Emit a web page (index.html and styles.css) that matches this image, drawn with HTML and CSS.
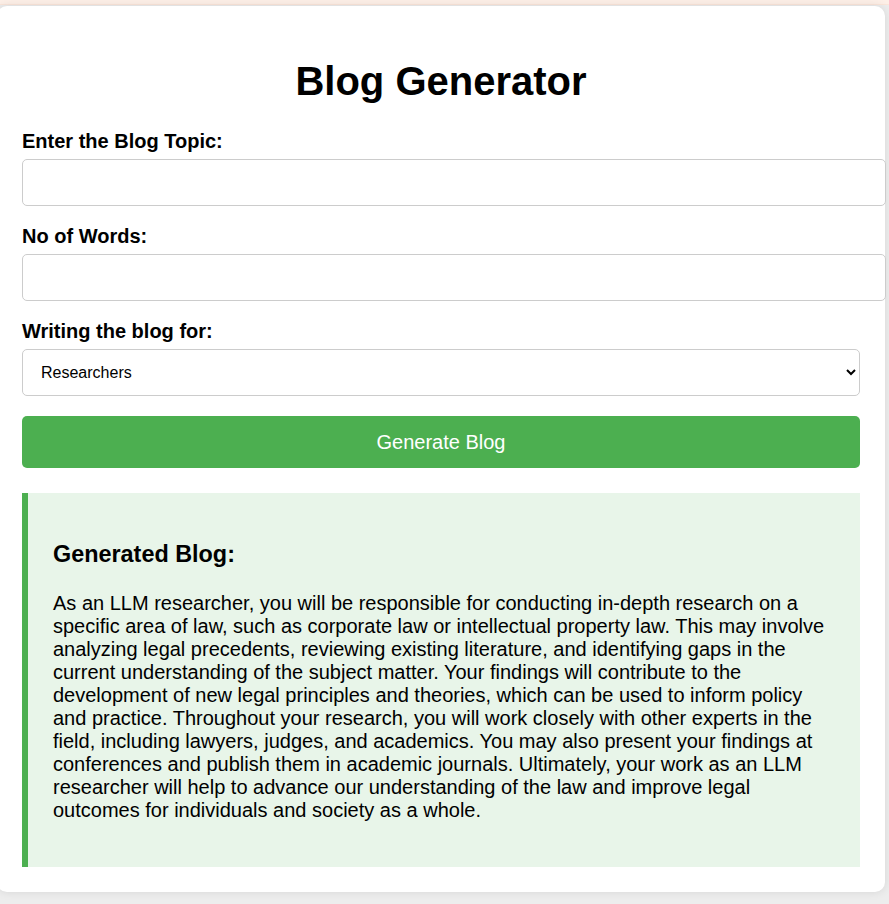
FILE: index.html
```html
<!DOCTYPE html>
<html lang="en">
<head>
<meta charset="utf-8">
<title>Blog Generator</title>
<link rel="stylesheet" href="styles.css">
</head>
<body>
<div class="topbar"></div>
<div class="card">
  <h1 class="title">Blog Generator</h1>
  <label class="field-label" for="topic">Enter the Blog Topic:</label>
  <input class="field-input" id="topic" type="text">
  <label class="field-label" for="words">No of Words:</label>
  <input class="field-input" id="words" type="text">
  <label class="field-label" for="audience">Writing the blog for:</label>
  <select class="field-select" id="audience">
    <option>Researchers</option>
    <option>Data Scientist</option>
    <option>Common People</option>
  </select>
  <button class="generate-btn" type="button">Generate Blog</button>
  <div class="output">
    <h3 class="output-title">Generated Blog:</h3>
    <p class="output-text">As an LLM researcher, you will be responsible for conducting in-depth research on a specific area of law, such as corporate law or intellectual property law. This may involve analyzing legal precedents, reviewing existing literature, and identifying gaps in the current understanding of the subject matter. Your findings will contribute to the development of new legal principles and theories, which can be used to inform policy and practice. Throughout your research, you will work closely with other experts in the field, including lawyers, judges, and academics. You may also present your findings at conferences and publish them in academic journals. Ultimately, your work as an LLM researcher will help to advance our understanding of the law and improve legal outcomes for individuals and society as a whole.</p>
  </div>
</div>
</body>
</html>
```
FILE: styles.css
```css
html, body {
  margin: 0;
  padding: 0;
  overflow: hidden;
}
body {
  background: #ededed;
  font-family: "Liberation Sans", Arial, sans-serif;
  font-size: 20px;
  color: #000;
}
.topbar {
  height: 4px;
  background: #fdefe7;
  border-bottom: 1px solid #fbe6da;
}
.card {
  margin: 1px 4px 13px -3px;
  padding: 25px;
  background: #fff;
  border-radius: 10px;
  box-shadow: 0 0 10px rgba(0, 0, 0, 0.1);
}
.title {
  font-size: 40px;
  line-height: 46px;
  margin: 27px 0 26px;
  text-align: center;
  font-weight: bold;
}
.field-label {
  display: block;
  font-weight: bold;
  font-size: 20px;
  line-height: 23px;
  margin-bottom: 6px;
}
.field-input {
  display: block;
  width: 100%;
  padding: 12px;
  font-size: 16px;
  line-height: 21px;
  height: 21px;
  border: 1px solid #ccc;
  border-radius: 5px;
  margin: 0 0 19px;
  font-family: "Liberation Sans", Arial, sans-serif;
  background: #fff;
}
.field-select {
  display: block;
  width: 100%;
  box-sizing: border-box;
  height: 47px;
  padding: 0 10px 0 14px;
  font-size: 16px;
  font-family: "Liberation Sans", Arial, sans-serif;
  color: #000;
  border: 1px solid #ccc;
  border-radius: 5px;
  background: #fff;
  margin: 0 0 20px;
}
.generate-btn {
  display: block;
  width: 100%;
  height: 52px;
  background: #4caf50;
  color: #fff;
  border: none;
  border-radius: 5px;
  font-size: 20px;
  font-family: "Liberation Sans", Arial, sans-serif;
  padding: 0;
}
.output {
  margin-top: 25px;
  background: #e8f5e9;
  border-left: 6px solid #4caf50;
  padding: 25px;
}
.output-title {
  font-size: 23.4px;
  line-height: 27px;
  margin: 23.4px 0;
  font-weight: bold;
}
.output-text {
  font-size: 20px;
  line-height: 23px;
  margin: 20px 0;
}
```
